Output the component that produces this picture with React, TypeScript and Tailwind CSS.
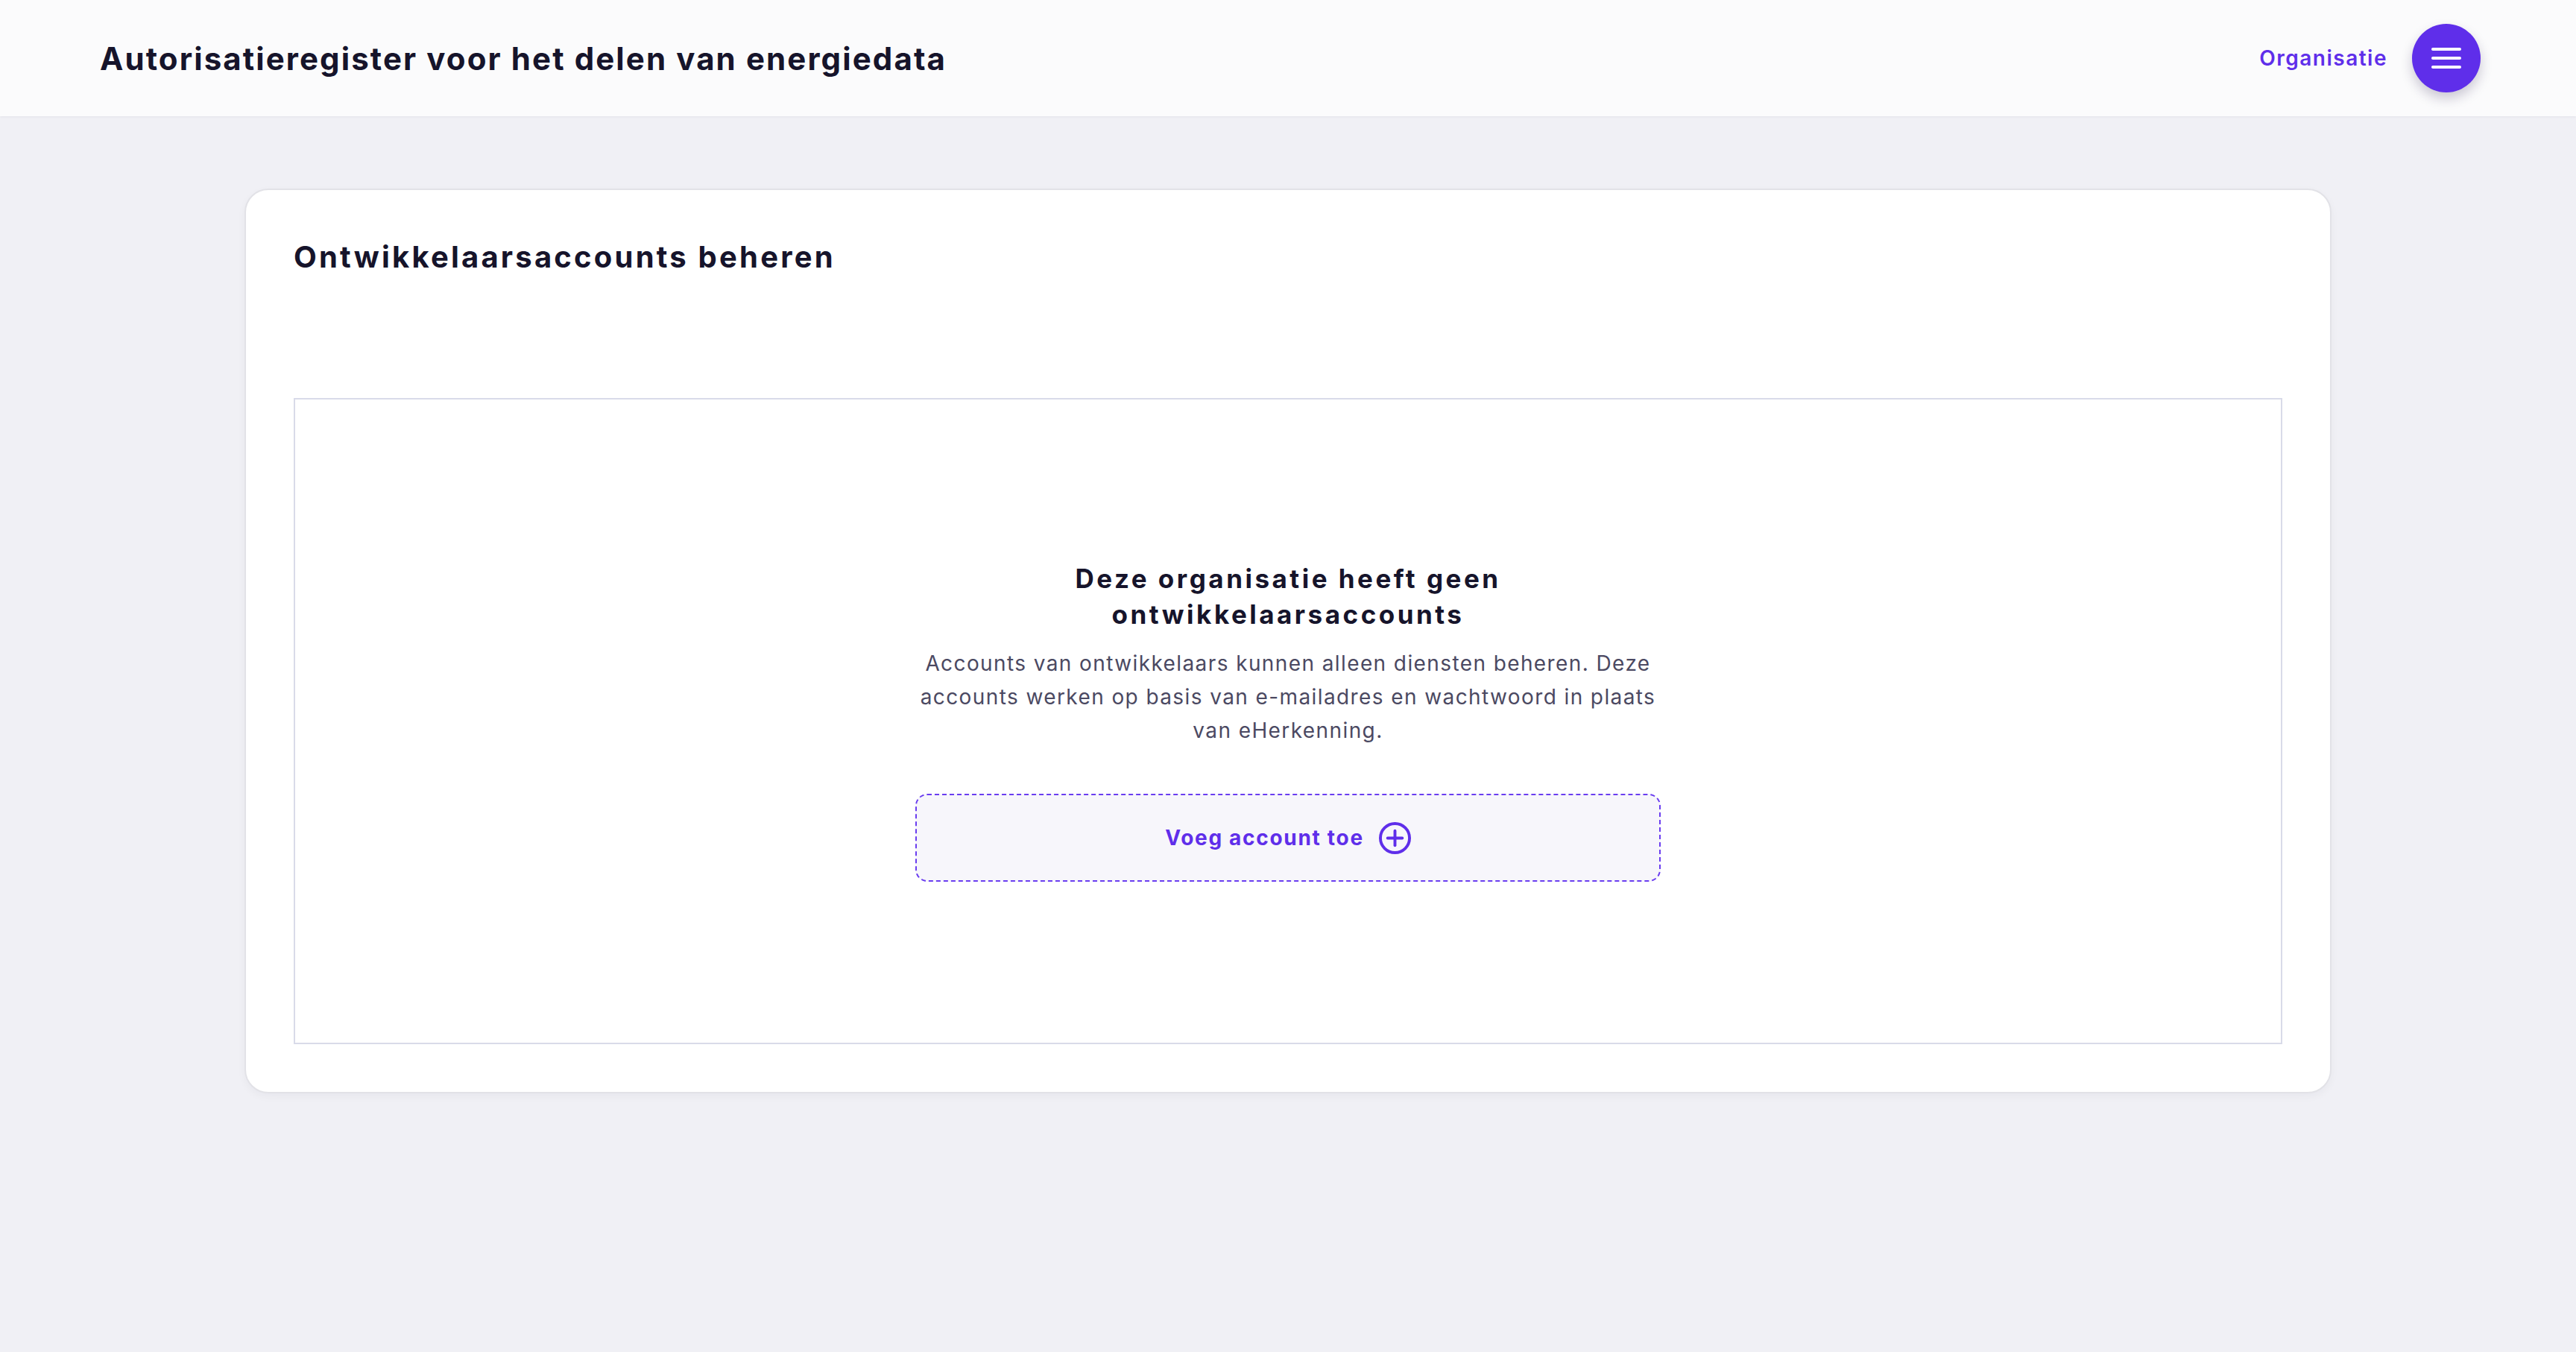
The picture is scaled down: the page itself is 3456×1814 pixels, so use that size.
import React from "react";

function MenuIcon() {
  return (
    <svg width="40" height="28" viewBox="0 0 40 28" fill="none">
      <line x1="2" y1="2" x2="38" y2="2" stroke="white" strokeWidth="4" strokeLinecap="round" />
      <line x1="2" y1="14" x2="38" y2="14" stroke="white" strokeWidth="4" strokeLinecap="round" />
      <line x1="2" y1="26" x2="38" y2="26" stroke="white" strokeWidth="4" strokeLinecap="round" />
    </svg>
  );
}

function PlusCircle() {
  return (
    <svg width="43" height="43" viewBox="0 0 22 22" fill="none" stroke="currentColor" strokeWidth="2" strokeLinecap="round">
      <circle cx="11" cy="11" r="10" />
      <line x1="6" y1="11" x2="16" y2="11" />
      <line x1="11" y1="6" x2="11" y2="16" />
    </svg>
  );
}

export default function App() {
  return (
    <div className="min-h-screen w-full bg-[#f0f0f5] font-['Inter',sans-serif] text-[#16142b]">
      {/* Header */}
      <header className="h-[156px] bg-[#fbfbfc] shadow-[0_1px_3px_rgba(20,20,50,0.06)] flex items-center justify-between pl-[134px] pr-[128px]">
        <h1 className="text-[42px] font-bold tracking-[2.1px]">
          Autorisatieregister voor het delen van energiedata
        </h1>
        <div className="flex items-center gap-[33px]">
          <a className="text-[28px] font-semibold text-[#5f2eea] tracking-[1.5px]">Organisatie</a>
          <button className="w-[92px] h-[92px] rounded-full bg-[#5f2eea] flex items-center justify-center shadow-[0_8px_16px_rgba(30,20,70,0.22)]">
            <MenuIcon />
          </button>
        </div>
      </header>

      {/* Card */}
      <main className="px-[328px] pt-[97px] pb-[120px]">
        <div className="mx-auto max-w-[2800px] bg-white border-2 border-[#e2e2e7] rounded-[32px] p-[64px] shadow-[0_4px_12px_rgba(20,20,50,0.04)]">
          <h2 className="text-[40px] leading-[52px] font-bold tracking-[3.2px]">
            Ontwikkelaarsaccounts beheren
          </h2>

          <div className="mt-[163px] h-[867px] border-2 border-[#d9dbe9] flex flex-col items-center justify-center">
            <div className="w-[1000px] flex flex-col items-center text-center">
              <h3 className="text-[35px] leading-[48px] font-bold max-w-[680px] tracking-[3.5px]">
                Deze organisatie heeft geen ontwikkelaarsaccounts
              </h3>
              <p className="mt-[20px] max-w-[995px] text-[28px] leading-[45px] text-[#4b4962] tracking-[1.4px]">
                Accounts van ontwikkelaars kunnen alleen diensten beheren. Deze accounts werken op basis van e-mailadres en wachtwoord in plaats van eHerkenning.
              </p>
              <button className="mt-[62px] w-[1000px] h-[118px] border-2 border-dashed border-[#6a3df0] rounded-[16px] bg-[#f7f6fb] flex items-center justify-center gap-[20px] text-[#5f2eea]">
                <span className="text-[28px] font-bold tracking-[1.7px]">Voeg account toe</span>
                <PlusCircle />
              </button>
            </div>
          </div>
        </div>
      </main>
    </div>
  );
}
